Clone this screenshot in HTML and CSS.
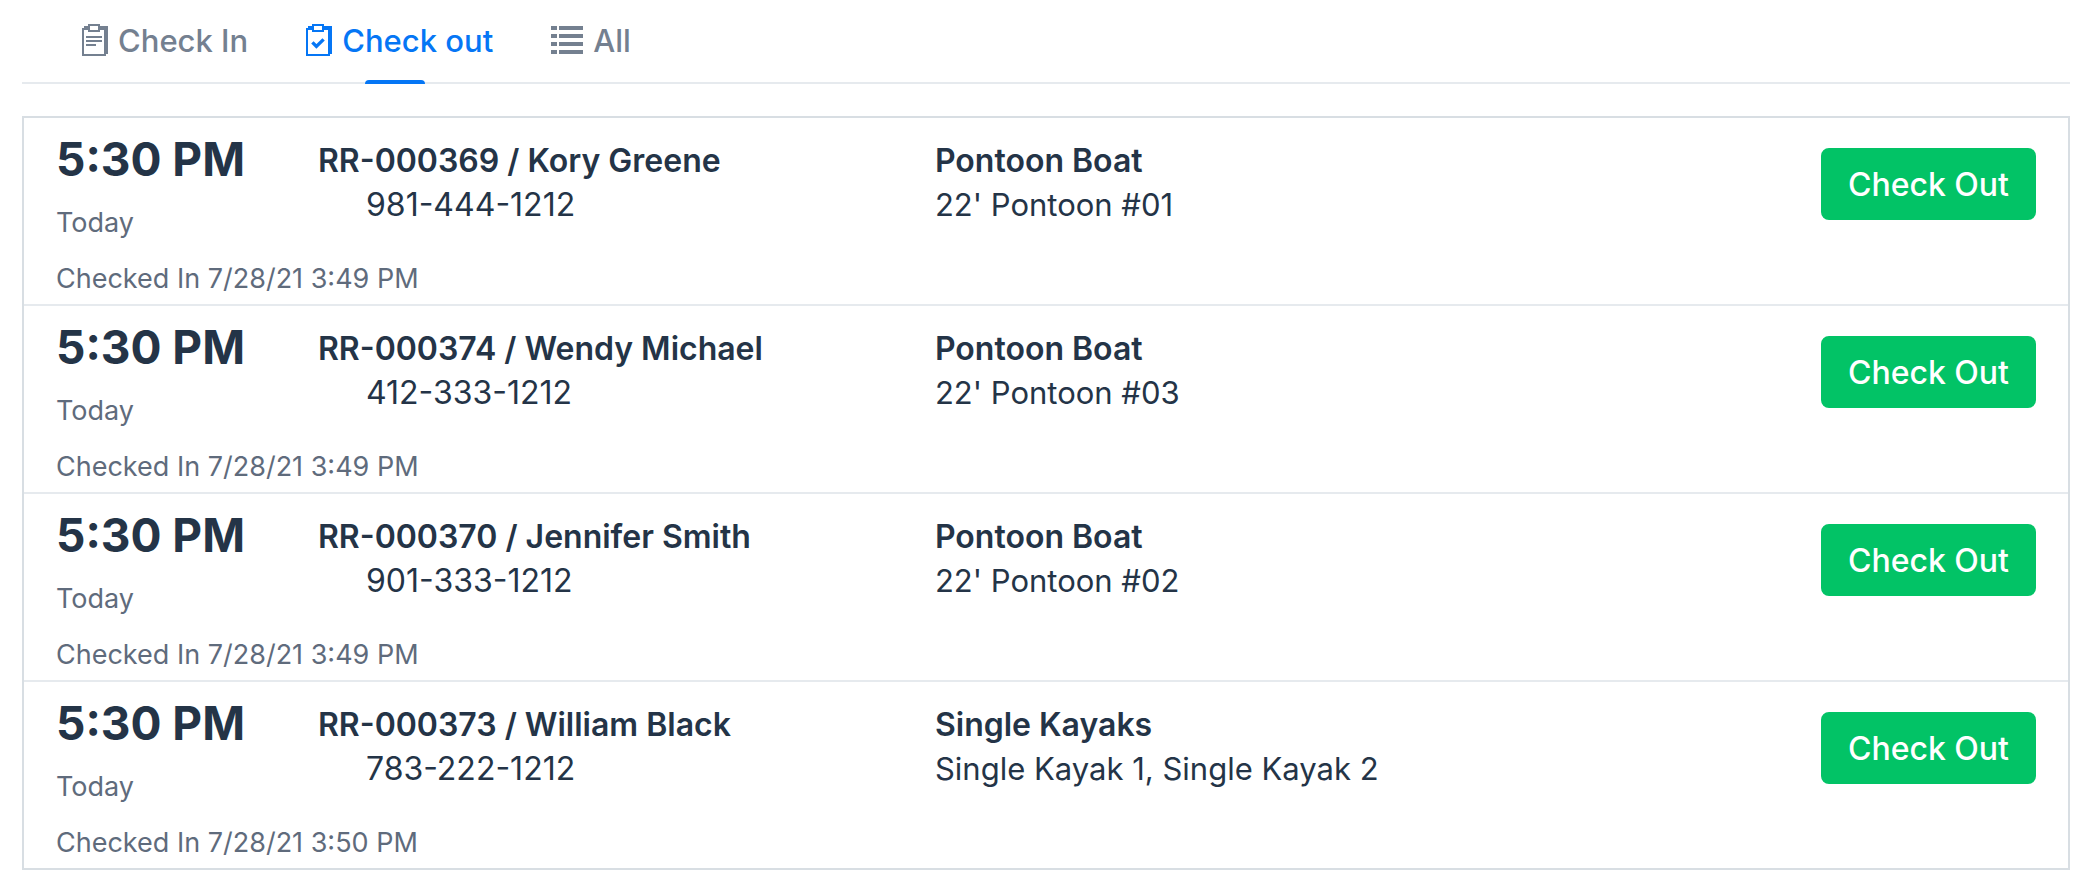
FILE: index.html
```html
<!DOCTYPE html>
<html lang="en">
<head>
<meta charset="utf-8">
<title>Check out</title>
<link rel="stylesheet" href="styles.css">
</head>
<body>
<nav class="tabs">
  <a class="tab" href="#check-in">
    <svg class="icon" width="26" height="32" viewBox="0 0 26 32" aria-hidden="true"><path fill-rule="evenodd" d="M0 4H2V2H6V0H18V2H26V30H24V32H0ZM2 6V30H22V6H18V8H6V6ZM8 2V6H16V2Z"/><path d="M4 12H20V14H4ZM4 16H20V18H4ZM4 20H14V22H4Z"/></svg>
    <span>Check In</span>
  </a>
  <a class="tab tab-active" href="#check-out" aria-current="page">
    <svg class="icon" width="26" height="32" viewBox="0 0 26 32" aria-hidden="true"><path fill-rule="evenodd" d="M0 4H2V2H6V0H18V2H26V30H24V32H0ZM2 6V30H22V6H18V8H6V6ZM8 2V6H16V2Z"/><path class="tick" d="M6.4 18.4L10.4 22.4L17.6 15.4"/></svg>
    <span>Check out</span>
  </a>
  <a class="tab" href="#all">
    <svg class="icon" width="32" height="28" viewBox="0 0 32 28" aria-hidden="true"><path d="M0 0H6V4H0ZM8 0H32V4H8ZM0 8H6V12H0ZM8 8H32V12H8ZM0 16H6V20H0ZM8 16H32V20H8ZM0 24H6V28H0ZM8 24H32V28H8Z"/></svg>
    <span>All</span>
  </a>
</nav>
<main class="list">
  <article class="row">
    <div><div class="time">5:30 PM</div><div class="note">Today</div></div>
    <div class="details"><div class="title">RR-000369 / Kory Greene</div><div class="phone">981-444-1212</div></div>
    <div class="details"><div class="title">Pontoon Boat</div><div>22' Pontoon #01</div></div>
    <button class="checkout" type="button">Check Out</button>
    <div class="note status">Checked In 7/28/21 3:49 PM</div>
  </article>
  <article class="row">
    <div><div class="time">5:30 PM</div><div class="note">Today</div></div>
    <div class="details"><div class="title">RR-000374 / Wendy Michael</div><div class="phone">412-333-1212</div></div>
    <div class="details"><div class="title">Pontoon Boat</div><div>22' Pontoon #03</div></div>
    <button class="checkout" type="button">Check Out</button>
    <div class="note status">Checked In 7/28/21 3:49 PM</div>
  </article>
  <article class="row">
    <div><div class="time">5:30 PM</div><div class="note">Today</div></div>
    <div class="details"><div class="title">RR-000370 / Jennifer Smith</div><div class="phone">901-333-1212</div></div>
    <div class="details"><div class="title">Pontoon Boat</div><div>22' Pontoon #02</div></div>
    <button class="checkout" type="button">Check Out</button>
    <div class="note status">Checked In 7/28/21 3:49 PM</div>
  </article>
  <article class="row">
    <div><div class="time">5:30 PM</div><div class="note">Today</div></div>
    <div class="details"><div class="title">RR-000373 / William Black</div><div class="phone">783-222-1212</div></div>
    <div class="details"><div class="title">Single Kayaks</div><div>Single Kayak 1, Single Kayak 2</div></div>
    <button class="checkout" type="button">Check Out</button>
    <div class="note status">Checked In 7/28/21 3:50 PM</div>
  </article>
</main>
</body>
</html>
```
FILE: styles.css
```css
* { box-sizing: border-box; }

body {
  margin: 0;
  padding: 0 12px 20px 22px;
  background: #fff;
  color: #243447;
  font-family: Inter, "Liberation Sans", sans-serif;
  font-size: 31px;
  line-height: 44px;
}

.tabs {
  display: flex;
  margin-bottom: 32px;
  padding-left: 26px;
  border-bottom: 2px solid #e6eaee;
}

.tab {
  position: relative;
  display: flex;
  align-items: center;
  gap: 10px;
  height: 82px;
  padding: 0 24px 2px 34px;
  color: #748090;
  font-weight: 500;
  text-decoration: none;
}

.tab span {
  padding-top: 2px;
}

.tab-active {
  color: #0576f5;
}

.tab-active::after {
  content: "";
  position: absolute;
  bottom: -2px;
  left: calc(50% - 30px);
  width: 60px;
  height: 4px;
  border-radius: 4px 4px 0 0;
  background: currentColor;
}

.icon {
  fill: currentColor;
}

.tick {
  fill: none;
  stroke: currentColor;
  stroke-width: 3.4;
}

.list {
  border: 2px solid #d8dee3;
}

.row {
  display: grid;
  grid-template-columns: 262fr 617fr 886fr auto;
  align-items: start;
  padding: 12px 32px 4px;
}

.row + .row {
  border-top: 2px solid #e6eaee;
}

.time {
  font-size: 46px;
  font-weight: 700;
  line-height: 58px;
}

.note {
  margin-top: 14px;
  color: #5f6b7c;
  font-size: 27px;
  line-height: 42px;
}

.status {
  grid-column: 1 / -1;
}

.details {
  padding-top: 9px;
}

.title {
  font-size: 32px;
  font-weight: 600;
}

.phone {
  padding-left: 48px;
  font-size: 32px;
}

.checkout {
  margin-top: 18px;
  padding: 15px 27px 13px;
  border: 0;
  border-radius: 8px;
  background: #02c366;
  color: #fff;
  font: inherit;
  font-size: 32px;
  font-weight: 500;
}
```
